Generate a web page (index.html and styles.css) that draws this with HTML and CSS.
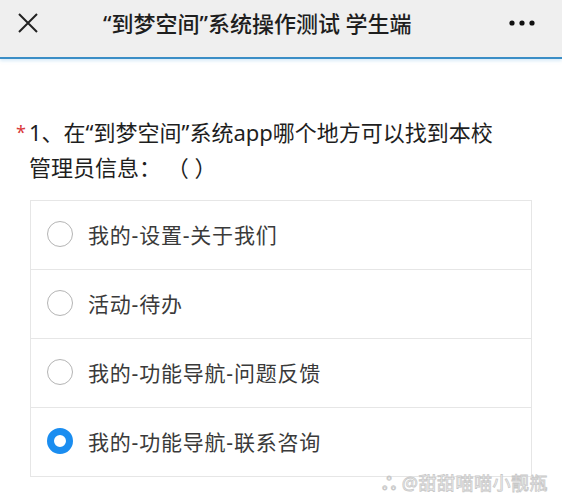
FILE: index.html
```html
<!DOCTYPE html>
<html lang="zh-CN">
<head>
<meta charset="utf-8">
<link rel="stylesheet" href="styles.css">
</head>
<body>
<header class="topbar">
  <svg class="close" width="22" height="22" viewBox="0 0 22 22"><path d="M2 2 L20 20 M20 2 L2 20" stroke="#222" stroke-width="2" fill="none"/></svg>
  <h1 class="title">“到梦空间”系统操作测试 学生端</h1>
  <svg class="more" width="26" height="6" viewBox="0 0 26 6"><circle cx="3" cy="3" r="2.6" fill="#111"/><circle cx="13" cy="3" r="2.6" fill="#111"/><circle cx="23" cy="3" r="2.6" fill="#111"/></svg>
</header>
<main class="content">
  <div class="question"><span class="star">*</span><span class="qtext">1、在“到梦空间”系统app哪个地方可以找到本校管理员信息：&nbsp;（&nbsp;）</span></div>
  <ul class="options">
    <li class="option"><span class="radio"></span><span class="label">我的-设置-关于我们</span></li>
    <li class="option"><span class="radio"></span><span class="label">活动-待办</span></li>
    <li class="option"><span class="radio"></span><span class="label">我的-功能导航-问题反馈</span></li>
    <li class="option"><span class="radio checked"></span><span class="label">我的-功能导航-联系咨询</span></li>
  </ul>
  <div class="watermark">ஃ @甜甜喵喵小靓瓶</div>
</main>
</body>
</html>
```
FILE: styles.css
```css
* { box-sizing: border-box; }
html, body { margin: 0; padding: 0; background: #fff; }
body {
  width: 562px;
  height: 500px;
  overflow: hidden;
  font-family: "Noto Sans", "Noto Sans CJK SC", sans-serif;
  color: #222;
}
.topbar {
  height: 59px;
  background: #efefef;
  border-bottom: 2px solid #3b8ec6;
  display: flex;
  align-items: center;
  padding: 0 27px 12px 17px;
  box-shadow: 0 2px 3px rgba(150, 200, 235, 0.35);
}
.close { flex: none; }
.title {
  flex: 1;
  margin: 0 0 0 64px;
  text-align: left;
  font-size: 22px;
  line-height: 30px;
  font-weight: 500;
  color: #1e1e1e;
}
.more { flex: none; }
.content {
  padding: 56px 0 0 0;
  position: relative;
  height: 441px;
}
.question {
  display: flex;
  padding: 0 60px 0 16px;
  font-size: 22px;
  line-height: 35px;
  color: #1e1e1e;
}
.star {
  color: #d9393a;
  font-size: 18px;
  width: 13px;
  flex: none;
  line-height: 35px;
}
.qtext { flex: 1; }
.options {
  list-style: none;
  margin: 15px 0 0 30px;
  padding: 0;
  width: 502px;
  border: 1px solid #e6e6e6;
}
.option {
  height: 69px;
  display: flex;
  align-items: center;
  padding: 0 0 3px 16px;
  border-top: 1px solid #e6e6e6;
}
.option:first-child { border-top: none; height: 68px; }
.radio {
  width: 26px;
  height: 26px;
  border: 1.5px solid #b4b4b4;
  border-radius: 50%;
  flex: none;
  margin-right: 15px;
}
.radio.checked {
  border: 7px solid #1a8df0;
  background: #fff;
}
.label {
  font-size: 21px;
  color: #3a3a3a;
  letter-spacing: 0.8px;
}
.watermark {
  position: absolute;
  right: 14px;
  bottom: 3px;
  font-size: 18px;
  color: #fff;
  -webkit-text-stroke: 0.8px #c8c8c8;
  letter-spacing: 0.5px;
}
```
